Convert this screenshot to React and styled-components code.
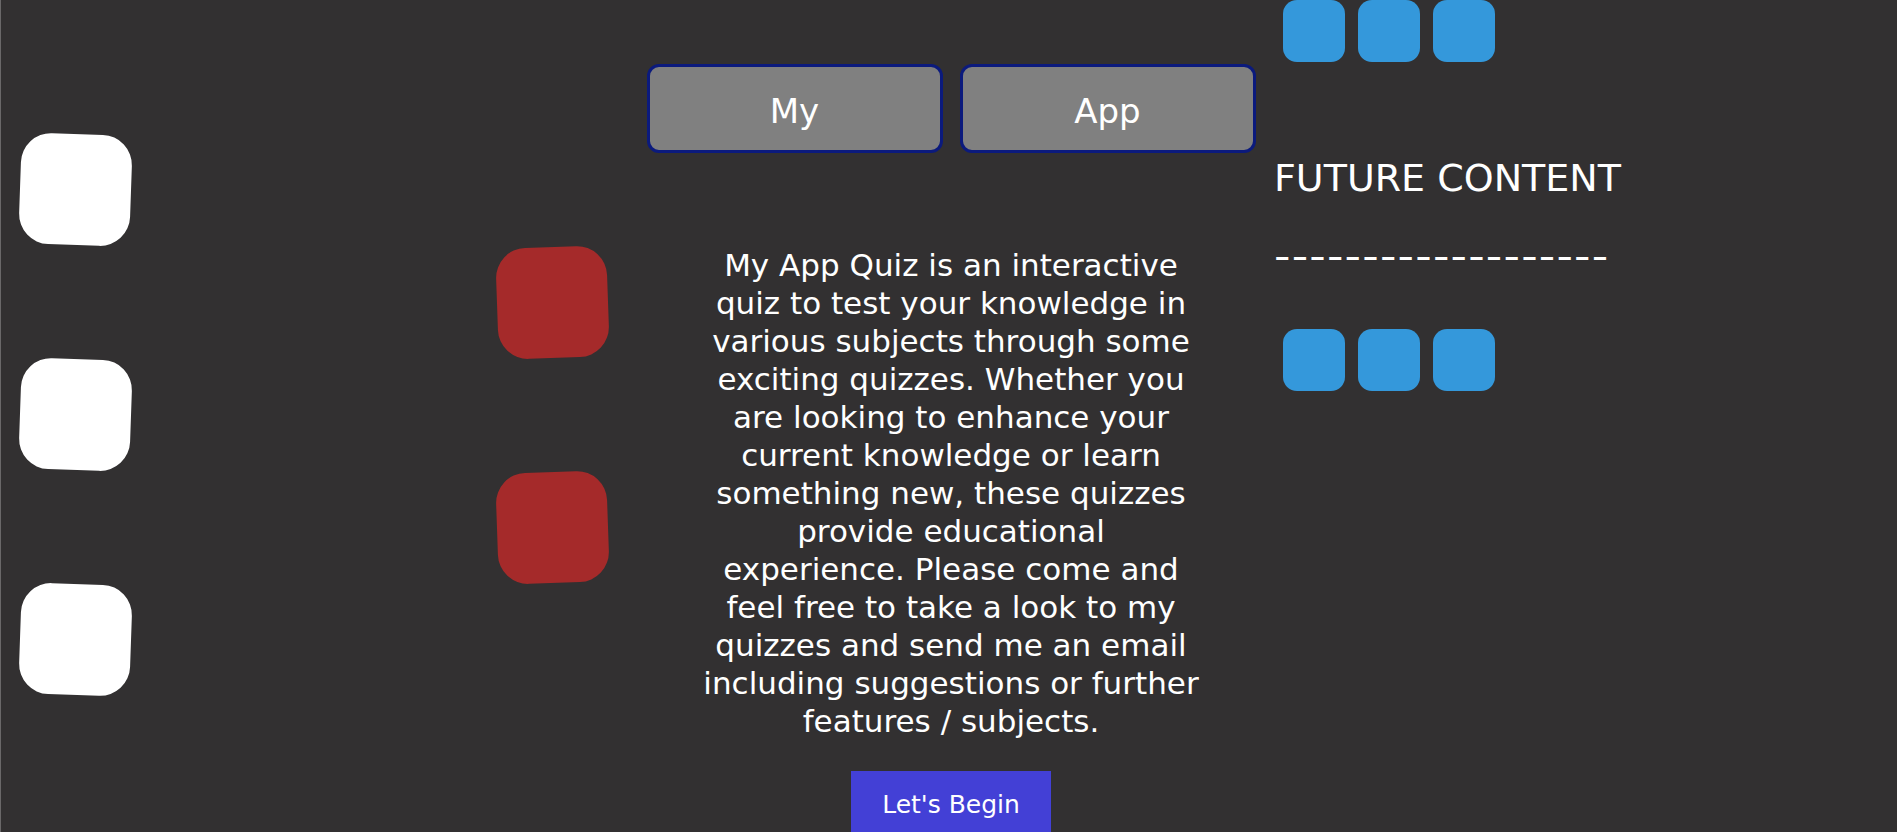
import React from "react";
import styled, { createGlobalStyle } from "styled-components";

const GlobalStyle = createGlobalStyle`
  html, body {
    margin: 0;
    padding: 0;
    background: #323031;
    font-family: "DejaVu Sans", Verdana, sans-serif;
    color: #ffffff;
  }
  * {
    box-sizing: border-box;
  }
`;

//Page grid: tiles | red tiles | main | future content
const Page = styled.div`
  display: grid;
  grid-template-columns: 496px 150px 608px 1fr;
  min-height: 100vh;
  border-left: 1px solid #6a6869;
`;

//Column of tilted tiles
const TileColumn = styled.div`
  display: flex;
  flex-direction: column;
  gap: ${(props) => props.$gap}px;
  padding-top: ${(props) => props.$top}px;
  padding-left: ${(props) => props.$left}px;
`;

//Rounded tiles, slightly tilted
const Tile = styled.div`
  width: ${(props) => props.$size}px;
  height: ${(props) => props.$size}px;
  border-radius: ${(props) => props.$radius}px;
  background: ${(props) => props.$color};
  transform: rotate(${(props) => props.$tilt || 0}deg);
  flex-shrink: 0;
`;

//Main column
const Main = styled.main`
  display: flex;
  flex-direction: column;
  align-items: center;
`;

const ButtonRow = styled.div`
  display: flex;
  gap: 17px;
  margin-top: 64px;
`;

const NavButton = styled.button`
  width: 296px;
  height: 89px;
  padding: 5px 0 0;
  background: #808080;
  border: 3px solid #0b1a7d;
  border-radius: 12px;
  color: #ffffff;
  font-family: "DejaVu Sans", Verdana, sans-serif;
  font-size: 34px;
  cursor: pointer;
`;

const Intro = styled.p`
  width: 498px;
  margin: 93px 0 0;
  font-size: 31px;
  line-height: 38px;
  text-align: center;
`;

const BeginButton = styled.button`
  width: 200px;
  margin-top: 31px;
  padding: 20px 0 22px;
  background: #4340d6;
  border: none;
  color: #ffffff;
  font-family: "DejaVu Sans", Verdana, sans-serif;
  font-size: 25px;
  line-height: 28px;
  cursor: pointer;
`;

//Right column
const Side = styled.aside`
  display: flex;
  flex-direction: column;
  align-items: flex-start;
  padding-left: 19px;
`;

const TileRow = styled.div`
  display: flex;
  gap: 13px;
  padding-left: 9px;
  margin-top: ${(props) => props.$top}px;
`;

const SideTitle = styled.h2`
  margin: 94px 0 0;
  font-size: 38px;
  font-weight: 400;
  line-height: 44px;
`;

//wider hyphens, like the original font
const Dashes = styled.div`
  margin-top: 34px;
  font-size: 38px;
  line-height: 44px;
  letter-spacing: 1px;
  transform: scaleX(1.2);
  transform-origin: left center;
`;

const blueRow = (top) => (
  <TileRow $top={top}>
    {[0, 1, 2].map((i) => (
      <Tile key={i} $size={62} $radius={14} $color="#3498db" />
    ))}
  </TileRow>
);

const App = () => {
  return (
    <>
      <GlobalStyle />
      <Page>
        <TileColumn $gap={114} $top={134} $left={19}>
          <Tile $size={111} $radius={30} $color="#ffffff" $tilt={2} />
          <Tile $size={111} $radius={30} $color="#ffffff" $tilt={2} />
          <Tile $size={111} $radius={30} $color="#ffffff" $tilt={2} />
        </TileColumn>

        <TileColumn $gap={114} $top={247} $left={0}>
          <Tile $size={111} $radius={30} $color="#a52a2a" $tilt={-2} />
          <Tile $size={111} $radius={30} $color="#a52a2a" $tilt={-2} />
        </TileColumn>

        <Main>
          <ButtonRow>
            <NavButton>My</NavButton>
            <NavButton>App</NavButton>
          </ButtonRow>
          <Intro>
            My App Quiz is an interactive quiz to test your knowledge in various
            subjects through some exciting quizzes. Whether you are looking to
            enhance your current knowledge or learn something new, these quizzes
            provide educational experience. Please come and feel free to take a
            look to my quizzes and send me an email including suggestions or
            further features / subjects.
          </Intro>
          <BeginButton>Let's Begin</BeginButton>
        </Main>

        <Side>
          {blueRow(0)}
          <SideTitle>FUTURE CONTENT</SideTitle>
          <Dashes>-------------------</Dashes>
          {blueRow(51)}
        </Side>
      </Page>
    </>
  );
};

export default App;
